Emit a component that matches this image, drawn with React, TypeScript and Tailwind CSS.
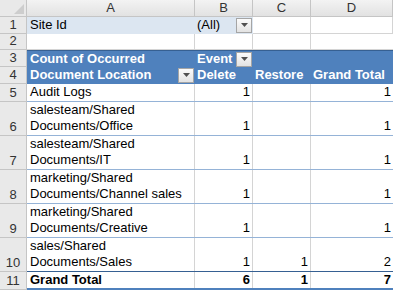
import React from "react";

type Row = {
  n: number;
  h: string;
  lines: string[];
  b?: number;
  c?: number;
  d?: number;
};

const body: Row[] = [
  { n: 5, h: "h-[18px]", lines: ["Audit Logs"], b: 1, d: 1 },
  { n: 6, h: "h-[34px]", lines: ["salesteam/Shared", "Documents/Office"], b: 1, d: 1 },
  { n: 7, h: "h-[34px]", lines: ["salesteam/Shared", "Documents/IT"], b: 1, d: 1 },
  { n: 8, h: "h-[34px]", lines: ["marketing/Shared", "Documents/Channel sales"], b: 1, d: 1 },
  { n: 9, h: "h-[34px]", lines: ["marketing/Shared", "Documents/Creative"], b: 1, d: 1 },
  { n: 10, h: "h-[34px]", lines: ["sales/Shared", "Documents/Sales"], b: 1, c: 1, d: 2 },
];

function DropButton() {
  return (
    <span className="flex h-[15px] w-[16px] shrink-0 items-center justify-center border border-[#a5a5a5] bg-gradient-to-b from-[#fbfbfb] to-[#e3e3e3]">
      <svg width="7" height="4" viewBox="0 0 7 4">
        <path d="M0 0h7L3.5 4z" fill="#505050" />
      </svg>
    </span>
  );
}

function RowNum({ n, h }: { n: number; h: string }) {
  return (
    <div
      className={`${h} flex w-[27px] shrink-0 items-end justify-center border-r border-b border-[#c5c5c5] bg-[#e9e9e9] pb-[1px] leading-[15px] text-[#333]`}
    >
      {n}
    </div>
  );
}

export default function App() {
  const font = { fontFamily: '"Liberation Sans", Arial, sans-serif' };
  return (
    <div className="h-[290px] w-[393px] overflow-hidden bg-white text-[13px] text-black" style={font}>
      {/* column letters */}
      <div className="flex h-[17px]">
        <div className="relative w-[27px] shrink-0 border-r border-b border-[#c5c5c5] bg-[#e9e9e9]">
          <svg className="absolute top-[4px] left-[14px]" width="10" height="10" viewBox="0 0 10 10">
            <path d="M10 0v10H0z" fill="#cdcdcd" />
          </svg>
        </div>
        {["A", "B", "C", "D"].map((l, i) => (
          <div
            key={l}
            className={`${["w-[168px]", "w-[58px]", "w-[58px]", "flex-1"][i]} flex items-center justify-center border-r border-b border-[#c5c5c5] bg-gradient-to-b from-[#f3f3f3] to-[#e2e2e2] leading-[16px] text-[#333]`}
          >
            {l}
          </div>
        ))}
      </div>

      {/* report filter */}
      <div className="flex h-[17px]">
        <RowNum n={1} h="h-[17px]" />
        <div className="flex w-[226px] items-center border-b border-[#dce6f1] bg-[#dce6f1]">
          <span className="w-[168px] pl-[3px]">Site Id</span>
          <span className="flex flex-1 items-center justify-between pr-[1px] pl-[2px]">
            (All)
            <DropButton />
          </span>
        </div>
        <div className="w-[58px] border-r border-b border-[#d4d4d4]" />
        <div className="flex-1 border-r border-b border-[#d4d4d4]" />
      </div>
      <div className="flex h-[16px]">
        <RowNum n={2} h="h-[16px]" />
        <div className="w-[168px] border-r border-b border-[#d4d4d4]" />
        <div className="w-[58px] border-r border-b border-[#d4d4d4]" />
        <div className="w-[58px] border-r border-b border-[#d4d4d4]" />
        <div className="flex-1 border-b border-[#d4d4d4]" />
      </div>

      {/* pivot header */}
      <div className="flex h-[17px]">
        <RowNum n={3} h="h-[17px]" />
        <div className="flex flex-1 items-end border-t border-[#366092] bg-[#4f81bd] font-bold leading-[16px] text-white">
          <span className="w-[168px] pl-[3px]">Count of Occurred</span>
          <span className="flex w-[58px] items-center justify-between pr-[1px] pl-[2px]">
            Event
            <DropButton />
          </span>
        </div>
      </div>
      <div className="flex h-[17px]">
        <RowNum n={4} h="h-[17px]" />
        <div className="flex flex-1 items-end bg-[#4f81bd] pb-[1px] font-bold leading-[16px] text-white">
          <span className="flex w-[168px] items-center justify-between pr-[1px] pl-[3px]">
            Document Location
            <DropButton />
          </span>
          <span className="w-[58px] pl-[2px]">Delete</span>
          <span className="w-[58px] pl-[2px]">Restore</span>
          <span className="flex-1 pl-[2px]">Grand Total</span>
        </div>
      </div>

      {/* data rows */}
      {body.map((r, i) => (
        <div key={r.n} className={`${r.h} flex`}>
          <RowNum n={r.n} h={r.h} />
          <div
            className={`flex flex-1 border-b ${i === body.length - 1 ? "border-[#366092]" : "border-[#95b3d7]"}`}
          >
            <div className="flex w-[168px] flex-col justify-end border-r border-[#d4d4d4] pb-[1px] pl-[3px] leading-[16px]">
              {r.lines.map((t) => (
                <span key={t}>{t}</span>
              ))}
            </div>
            {[r.b, r.c, r.d].map((v, j) => (
              <div
                key={j}
                className={`${j === 2 ? "flex-1" : "w-[58px] border-r border-[#d4d4d4]"} flex items-end justify-end pr-[2px] pb-[1px] leading-[16px]`}
              >
                {v ?? ""}
              </div>
            ))}
          </div>
        </div>
      ))}

      {/* grand total */}
      <div className="flex h-[18px]">
        <RowNum n={11} h="h-[18px]" />
        <div className="flex flex-1 border-b-2 border-[#4f81bd] font-bold leading-[16px]">
          <span className="w-[168px] border-r border-[#d4d4d4] pl-[3px]">Grand Total</span>
          <span className="w-[58px] border-r border-[#d4d4d4] pr-[2px] text-right">6</span>
          <span className="w-[58px] border-r border-[#d4d4d4] pr-[2px] text-right">1</span>
          <span className="flex-1 pr-[2px] text-right">7</span>
        </div>
      </div>
    </div>
  );
}
